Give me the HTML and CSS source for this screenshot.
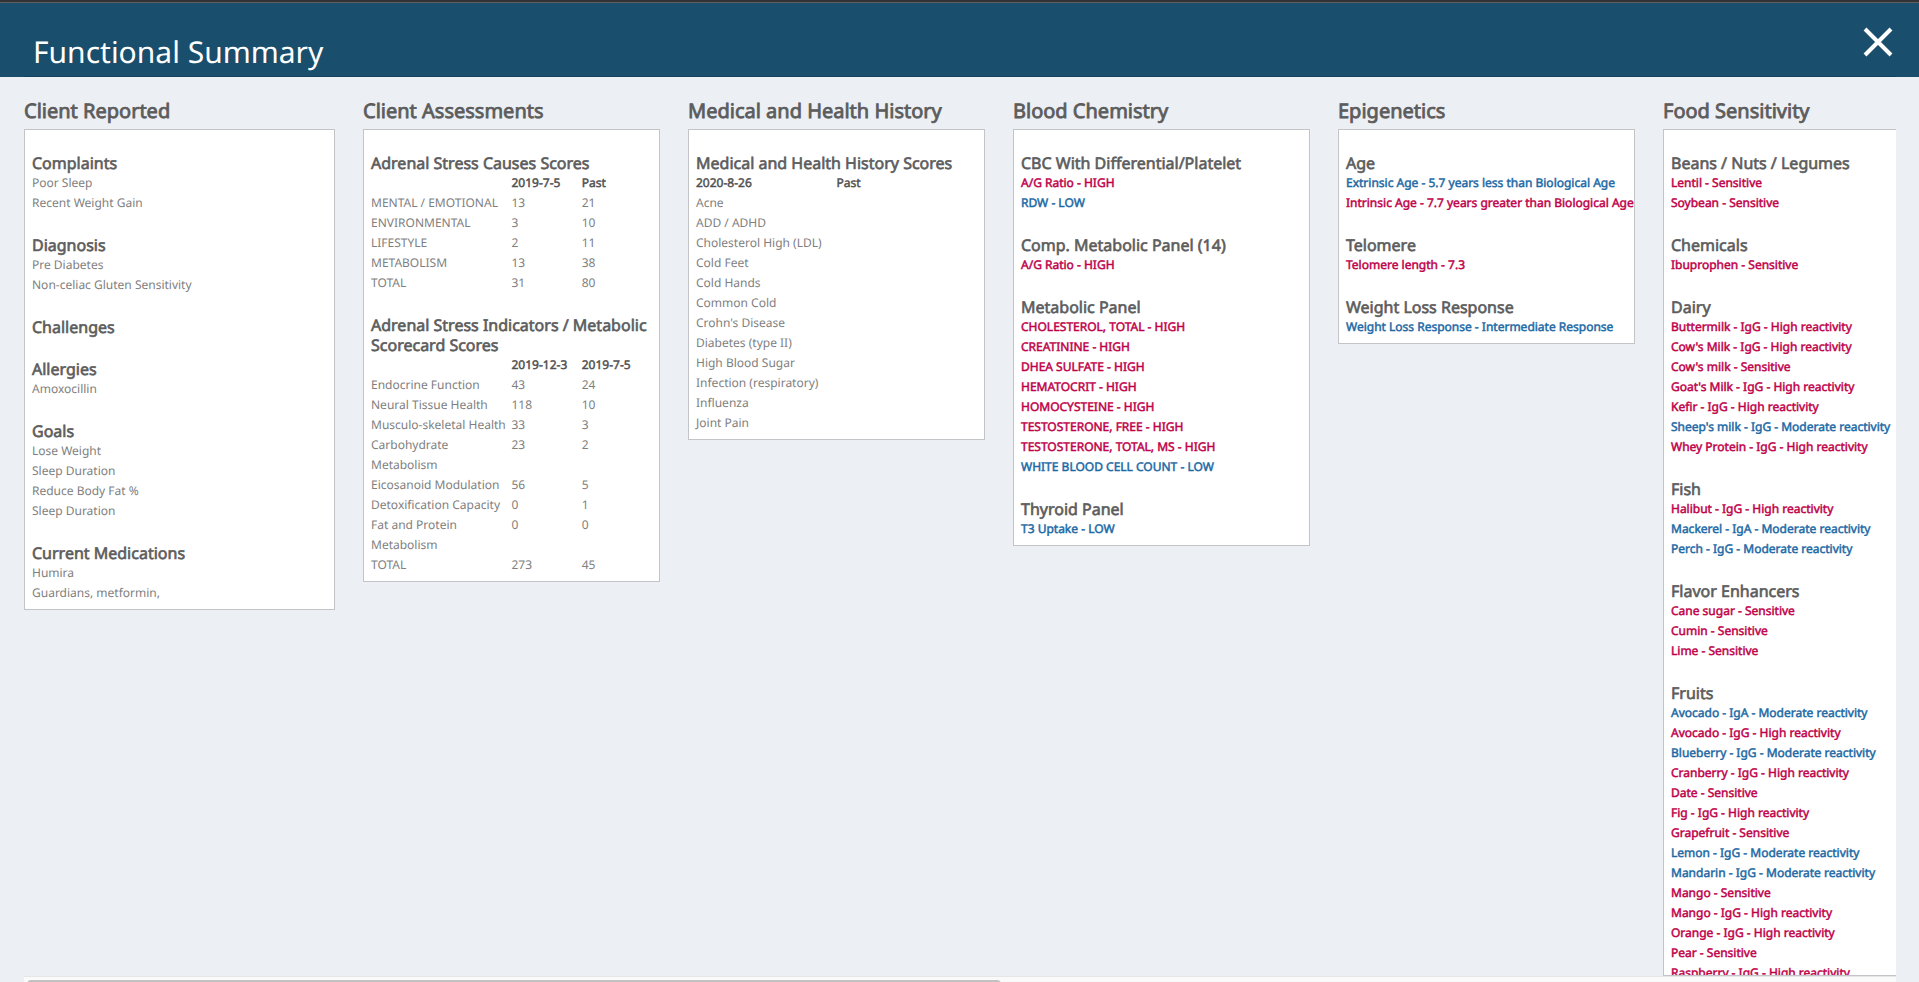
FILE: index.html
```html
<!DOCTYPE html>
<html lang="en">
<head>
<meta charset="utf-8">
<title>Functional Summary</title>
<link rel="stylesheet" href="styles.css">
</head>
<body>
<header class="header">
  <div class="header-bar">
    <h1 class="header-title">Functional Summary</h1>
    <button class="close" type="button" aria-label="Close">
      <svg class="close-icon" viewBox="0 0 30 30" aria-hidden="true"><path d="M2 2 28 28M28 2 2 28"/></svg>
    </button>
  </div>
</header>
<main class="board">
  <section class="column column-wide">
    <h2 class="column-title">Client Reported</h2>
    <div class="card">
      <section><h3>Complaints</h3><ul><li>Poor Sleep</li><li>Recent Weight Gain</li></ul></section>
      <section><h3>Diagnosis</h3><ul><li>Pre Diabetes</li><li>Non-celiac Gluten Sensitivity</li></ul></section>
      <section><h3>Challenges</h3></section>
      <section><h3>Allergies</h3><ul><li>Amoxocillin</li></ul></section>
      <section><h3>Goals</h3><ul><li>Lose Weight</li><li>Sleep Duration</li><li>Reduce Body Fat %</li><li>Sleep Duration</li></ul></section>
      <section><h3>Current Medications</h3><ul><li>Humira</li><li>Guardians, metformin,</li></ul></section>
    </div>
  </section>

  <section class="column">
    <h2 class="column-title">Client Assessments</h2>
    <div class="card">
      <section>
        <h3>Adrenal Stress Causes Scores</h3>
        <table class="scores">
          <thead><tr><td class="label"></td><th>2019-7-5</th><th>Past</th></tr></thead>
          <tbody>
            <tr><td>MENTAL / EMOTIONAL</td><td>13</td><td>21</td></tr>
            <tr><td>ENVIRONMENTAL</td><td>3</td><td>10</td></tr>
            <tr><td>LIFESTYLE</td><td>2</td><td>11</td></tr>
            <tr><td>METABOLISM</td><td>13</td><td>38</td></tr>
            <tr><td>TOTAL</td><td>31</td><td>80</td></tr>
          </tbody>
        </table>
      </section>
      <section>
        <h3>Adrenal Stress Indicators / Metabolic Scorecard Scores</h3>
        <table class="scores">
          <thead><tr><td class="label"></td><th>2019-12-3</th><th>2019-7-5</th></tr></thead>
          <tbody>
            <tr><td>Endocrine Function</td><td>43</td><td>24</td></tr>
            <tr><td>Neural Tissue Health</td><td>118</td><td>10</td></tr>
            <tr><td>Musculo-skeletal Health</td><td>33</td><td>3</td></tr>
            <tr><td>Carbohydrate Metabolism</td><td>23</td><td>2</td></tr>
            <tr><td>Eicosanoid Modulation</td><td>56</td><td>5</td></tr>
            <tr><td>Detoxification Capacity</td><td>0</td><td>1</td></tr>
            <tr><td>Fat and Protein Metabolism</td><td>0</td><td>0</td></tr>
            <tr><td>TOTAL</td><td>273</td><td>45</td></tr>
          </tbody>
        </table>
      </section>
    </div>
  </section>

  <section class="column">
    <h2 class="column-title">Medical and Health History</h2>
    <div class="card">
      <section>
        <h3>Medical and Health History Scores</h3>
        <table class="scores">
          <thead><tr><th class="label">2020-8-26</th><th>Past</th></tr></thead>
          <tbody>
            <tr><td>Acne</td><td></td></tr>
            <tr><td>ADD / ADHD</td><td></td></tr>
            <tr><td>Cholesterol High (LDL)</td><td></td></tr>
            <tr><td>Cold Feet</td><td></td></tr>
            <tr><td>Cold Hands</td><td></td></tr>
            <tr><td>Common Cold</td><td></td></tr>
            <tr><td>Crohn's Disease</td><td></td></tr>
            <tr><td>Diabetes (type II)</td><td></td></tr>
            <tr><td>High Blood Sugar</td><td></td></tr>
            <tr><td>Infection (respiratory)</td><td></td></tr>
            <tr><td>Influenza</td><td></td></tr>
            <tr><td>Joint Pain</td><td></td></tr>
          </tbody>
        </table>
      </section>
    </div>
  </section>

  <section class="column">
    <h2 class="column-title">Blood Chemistry</h2>
    <div class="card">
      <section><h3>CBC With Differential/Platelet</h3><ul><li class="high">A/G Ratio - HIGH</li><li class="low">RDW - LOW</li></ul></section>
      <section><h3>Comp. Metabolic Panel (14)</h3><ul><li class="high">A/G Ratio - HIGH</li></ul></section>
      <section><h3>Metabolic Panel</h3>
        <ul>
          <li class="high">CHOLESTEROL, TOTAL - HIGH</li>
          <li class="high">CREATININE - HIGH</li>
          <li class="high">DHEA SULFATE - HIGH</li>
          <li class="high">HEMATOCRIT - HIGH</li>
          <li class="high">HOMOCYSTEINE - HIGH</li>
          <li class="high">TESTOSTERONE, FREE - HIGH</li>
          <li class="high">TESTOSTERONE, TOTAL, MS - HIGH</li>
          <li class="low">WHITE BLOOD CELL COUNT - LOW</li>
        </ul>
      </section>
      <section><h3>Thyroid Panel</h3><ul><li class="low">T3 Uptake - LOW</li></ul></section>
    </div>
  </section>

  <section class="column">
    <h2 class="column-title">Epigenetics</h2>
    <div class="card">
      <section><h3>Age</h3><ul><li class="low">Extrinsic Age - 5.7 years less than Biological Age</li><li class="high">Intrinsic Age - 7.7 years greater than Biological Age</li></ul></section>
      <section><h3>Telomere</h3><ul><li class="high">Telomere length - 7.3</li></ul></section>
      <section><h3>Weight Loss Response</h3><ul><li class="low">Weight Loss Response - Intermediate Response</li></ul></section>
    </div>
  </section>

  <section class="column">
    <h2 class="column-title">Food Sensitivity</h2>
    <div class="card">
      <section><h3>Beans / Nuts / Legumes</h3><ul><li class="high">Lentil - Sensitive</li><li class="high">Soybean - Sensitive</li></ul></section>
      <section><h3>Chemicals</h3><ul><li class="high">Ibuprophen - Sensitive</li></ul></section>
      <section><h3>Dairy</h3>
        <ul>
          <li class="high">Buttermilk - IgG - High reactivity</li>
          <li class="high">Cow's Milk - IgG - High reactivity</li>
          <li class="high">Cow's milk - Sensitive</li>
          <li class="high">Goat's Milk - IgG - High reactivity</li>
          <li class="high">Kefir - IgG - High reactivity</li>
          <li class="low">Sheep's milk - IgG - Moderate reactivity</li>
          <li class="high">Whey Protein - IgG - High reactivity</li>
        </ul>
      </section>
      <section><h3>Fish</h3>
        <ul>
          <li class="high">Halibut - IgG - High reactivity</li>
          <li class="low">Mackerel - IgA - Moderate reactivity</li>
          <li class="low">Perch - IgG - Moderate reactivity</li>
        </ul>
      </section>
      <section><h3>Flavor Enhancers</h3>
        <ul>
          <li class="high">Cane sugar - Sensitive</li>
          <li class="high">Cumin - Sensitive</li>
          <li class="high">Lime - Sensitive</li>
        </ul>
      </section>
      <section><h3>Fruits</h3>
        <ul>
          <li class="low">Avocado - IgA - Moderate reactivity</li>
          <li class="high">Avocado - IgG - High reactivity</li>
          <li class="low">Blueberry - IgG - Moderate reactivity</li>
          <li class="high">Cranberry - IgG - High reactivity</li>
          <li class="high">Date - Sensitive</li>
          <li class="high">Fig - IgG - High reactivity</li>
          <li class="high">Grapefruit - Sensitive</li>
          <li class="low">Lemon - IgG - Moderate reactivity</li>
          <li class="low">Mandarin - IgG - Moderate reactivity</li>
          <li class="high">Mango - Sensitive</li>
          <li class="high">Mango - IgG - High reactivity</li>
          <li class="high">Orange - IgG - High reactivity</li>
          <li class="high">Pear - Sensitive</li>
          <li class="high">Raspberry - IgG - High reactivity</li>
        </ul>
      </section>
    </div>
  </section>
</main>
<div class="scroll-track"><div class="scroll-thumb"></div></div>
</body>
</html>
```
FILE: styles.css
```css
* {
  box-sizing: border-box;
}

body {
  margin: 0;
  height: 100vh;
  overflow: hidden;
  display: flex;
  flex-direction: column;
  background: #eceff4;
  color: #808080;
  font: 12px/20px "Noto Sans", sans-serif;
  text-rendering: geometricPrecision;
}

h1,
h2,
h3,
ul {
  margin: 0;
  padding: 0;
  font-weight: 400;
  list-style: none;
}

li {
  white-space: nowrap;
}

.header {
  flex: none;
  padding: 0 23px 0 24px;
  background: #194e6c;
  border-top: 2px solid #333335;
}

.header-bar {
  display: flex;
  justify-content: space-between;
  align-items: flex-start;
  padding: 24px 3px 1px 9px;
  border-bottom: 1px solid #17425f;
}

.header::before {
  content: "";
  display: block;
  height: 1px;
  margin: 0 -23px 0 -24px;
  background: #5f6065;
}

.header-title {
  margin-top: 3px;
  padding-bottom: 1px;
  color: #fff;
  font-size: 30px;
  line-height: 44px;
}

.close {
  padding: 0;
  border: 0;
  background: none;
  cursor: pointer;
}

.close-icon {
  display: block;
  width: 30px;
  height: 30px;
  fill: none;
  stroke: #fff;
  stroke-width: 4;
}

.board {
  flex: 1;
  min-height: 0;
  margin: 0 23px 0 24px;
  padding-top: 20px;
  display: flex;
  gap: 28px;
  overflow: hidden;
}

.column {
  flex: none;
  width: 297px;
  max-height: 100%;
  display: flex;
  flex-direction: column;
}

.column-wide {
  width: 311px;
}

.column-title,
h3,
th,
.high,
.low {
  -webkit-text-stroke: 0.04em currentColor;
}

.column-title {
  flex: none;
  color: #5c5c5c;
  font-size: 20px;
  line-height: 28px;
  margin-bottom: 4px;
}

.card {
  min-height: 0;
  overflow: hidden;
  padding: 23px 7px 6px;
  background: #fff;
  border: 1px solid #c2c4c8;
  display: flex;
  flex-direction: column;
  gap: 22px;
}

.card > section {
  flex: none;
}

h3 {
  color: #5c5c5c;
  font-size: 16px;
  line-height: 20px;
}

.high {
  color: #bf0048;
}

.low {
  color: #1c69a5;
}

.scores {
  width: 100%;
  table-layout: fixed;
  border-collapse: collapse;
}

.scores td,
.scores th {
  height: 20px;
  padding: 0;
  text-align: left;
  vertical-align: top;
  font-weight: 400;
}

.scores th {
  color: #505050;
}

.scores .label {
  width: 50%;
}

.scroll-track {
  flex: none;
  height: 16px;
  margin: 0 23px -10px 24px;
  padding: 3px;
  background: #fafafa;
  border-top: 1px solid #e6e6e6;
}

.scroll-thumb {
  width: calc(100% * 12 / 23);
  height: 8px;
  border-radius: 4px;
  background: #c1c1c1;
}
```
